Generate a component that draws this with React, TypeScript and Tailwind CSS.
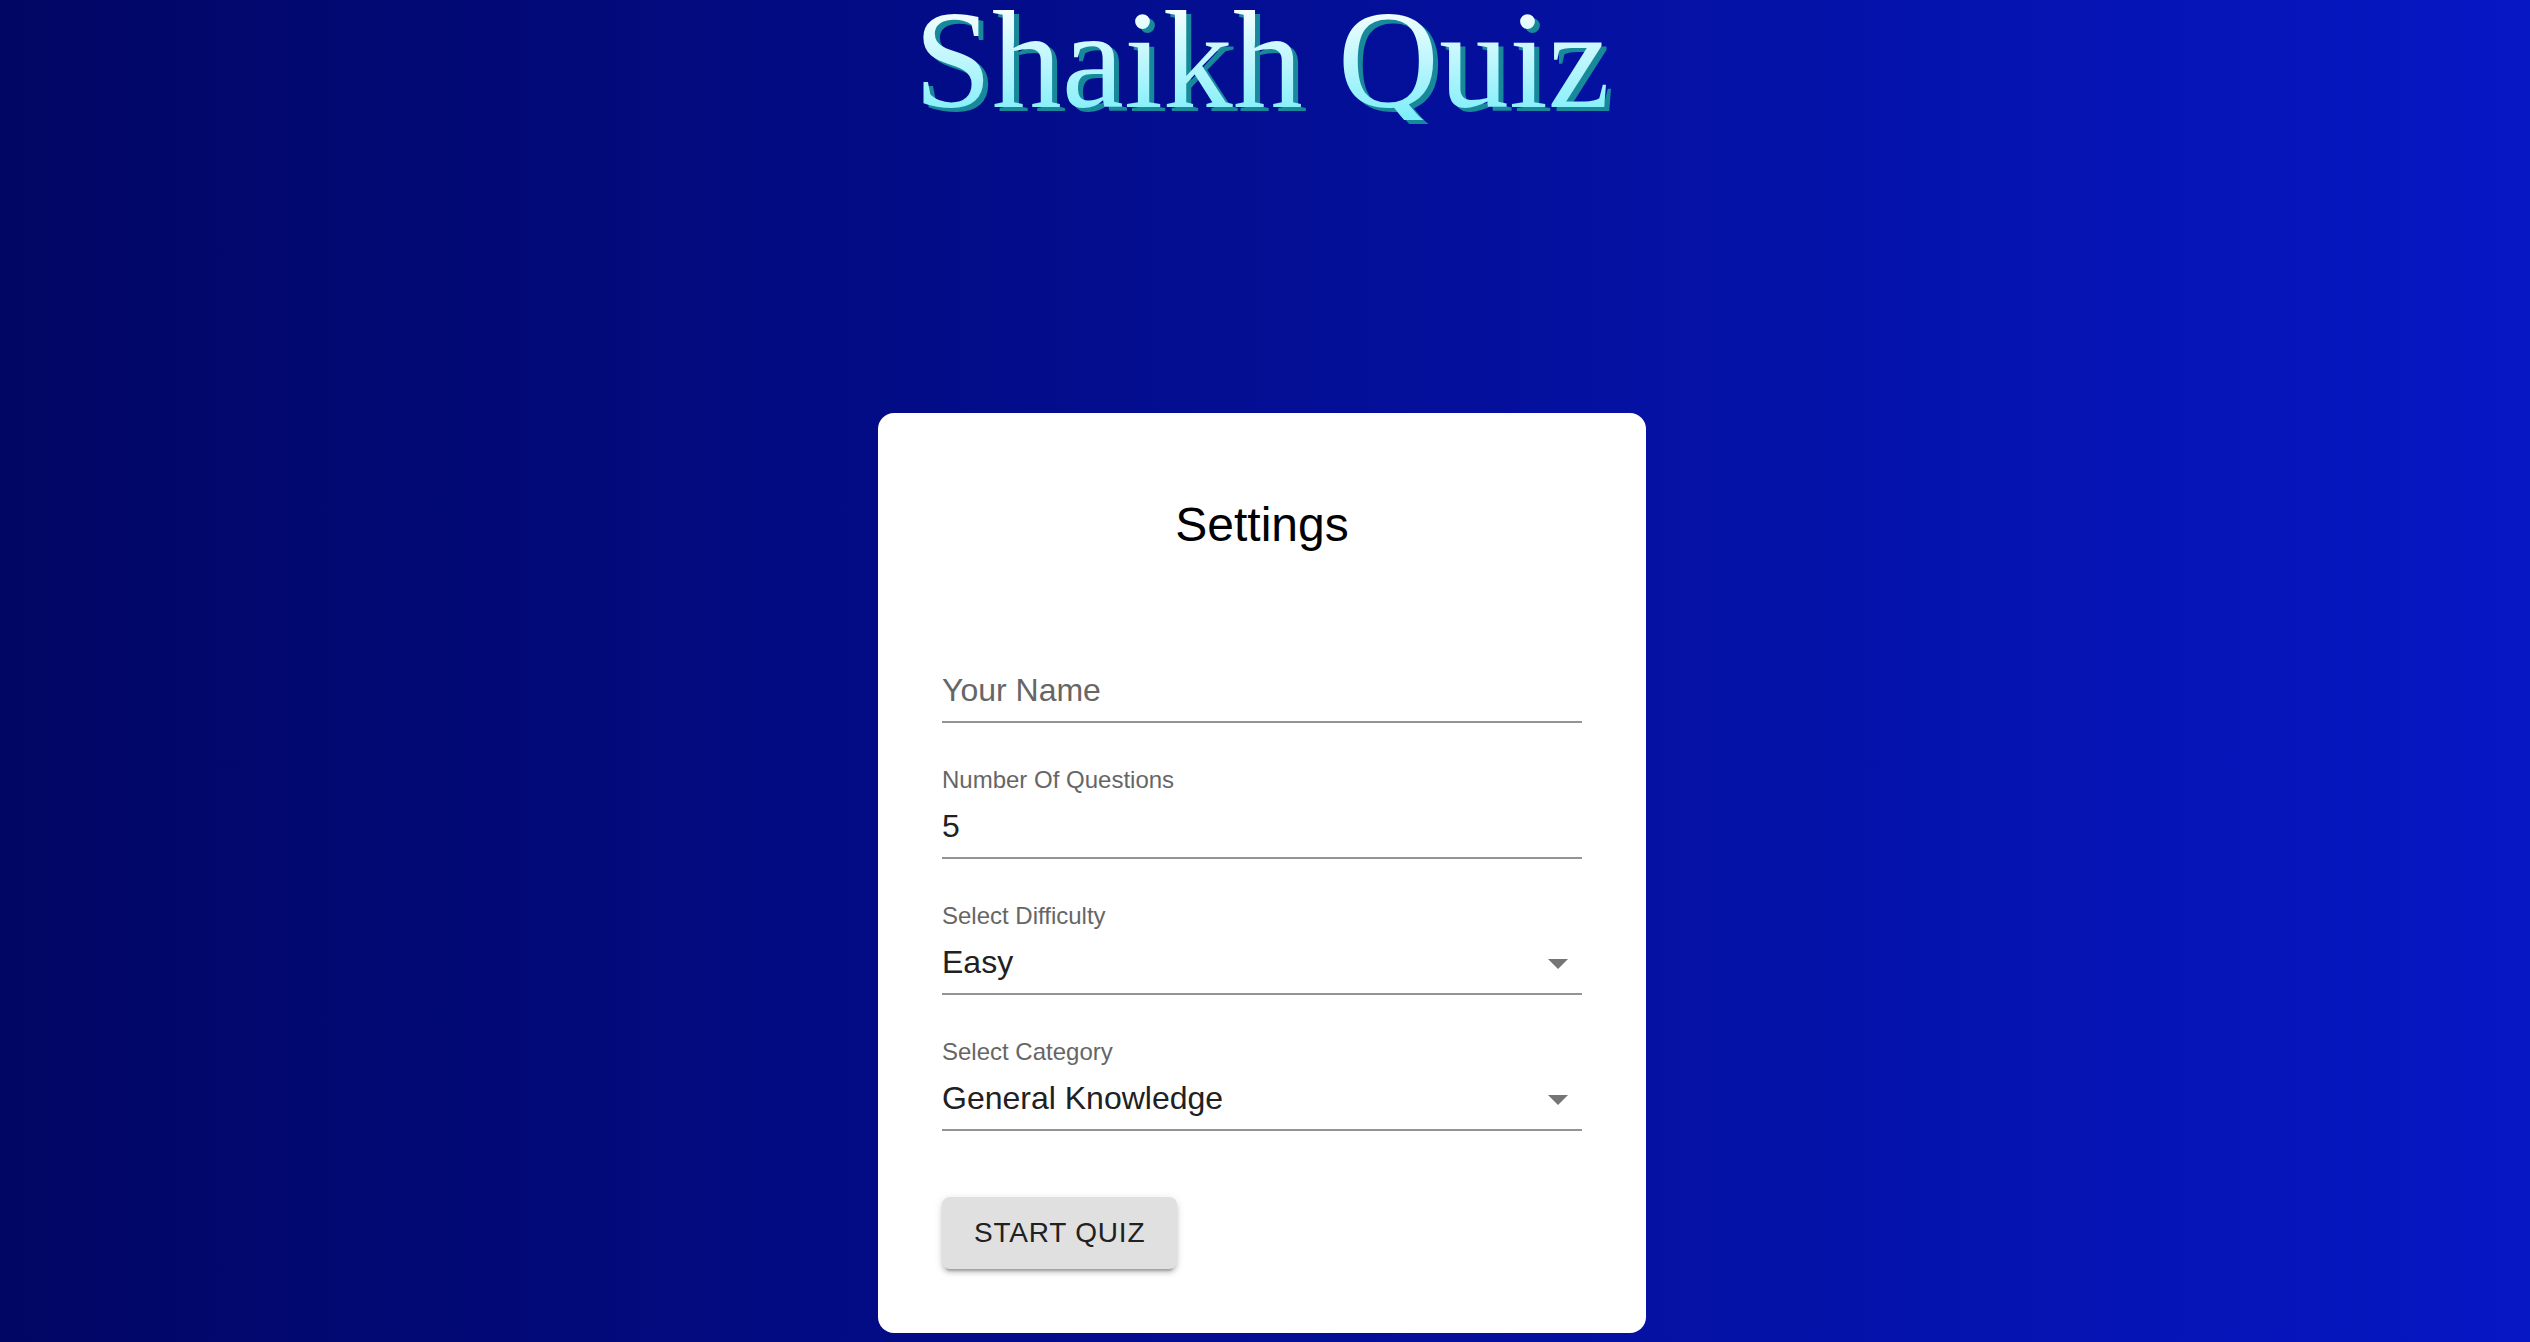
import React from "react";

function Arrow() {
  return (
    <svg
      viewBox="0 0 24 24"
      className="absolute right-0 top-[8px] w-[48px] h-[48px]"
      fill="#757575"
    >
      <path d="M7 10l5 5 5-5z" />
    </svg>
  );
}

function Field({
  label,
  value,
  select,
  placeholder,
}: {
  label?: string;
  value: string;
  select?: boolean;
  placeholder?: boolean;
}) {
  return (
    <div className="h-[96px] flex flex-col">
      <div className="h-[32px] pt-[5px] text-[24px] leading-[24px] text-[#666666]">
        {label ?? ""}
      </div>
      <div className="relative h-[64px] pt-[8px] pb-[8px] border-b-2 border-[#949494]">
        <div
          className={
            "text-[32px] leading-[46px] " +
            (placeholder ? "text-[#666666]" : "text-[#212121]")
          }
        >
          {value}
        </div>
        {select ? <Arrow /> : null}
      </div>
    </div>
  );
}

export default function App() {
  return (
    <div className="min-h-screen w-full pr-[6px] bg-[linear-gradient(to_right,#010664,#0617c4)] flex flex-col items-center">
      <h1 className="m-0 font-['Liberation_Serif','Times_New_Roman',serif] font-normal text-[140px] leading-[120px] bg-[linear-gradient(to_bottom,#f2feff_10%,#7ceefa_100%)] bg-clip-text text-transparent [filter:drop-shadow(5px_4px_0_#17899b)]">
        Shaikh Quiz
      </h1>
      <div className="mt-[293px] w-[768px] rounded-2xl bg-white px-16 pt-[80px] pb-16 font-['Liberation_Sans',Arial,sans-serif]">
        <div className="text-center text-[48px] leading-[64px] text-black">
          Settings
        </div>
        <div className="mt-[70px] flex flex-col gap-[40px]">
          <Field value="Your Name" placeholder />
          <Field label="Number Of Questions" value="5" />
          <Field label="Select Difficulty" value="Easy" select />
          <Field label="Select Category" value="General Knowledge" select />
        </div>
        <button className="mt-[66px] h-[72px] px-8 rounded-lg bg-[#e0e0e0] text-[28px] leading-[72px] tracking-[0.8px] text-[#212121] uppercase shadow-[0_6px_2px_-4px_rgba(0,0,0,0.2),0_4px_4px_0_rgba(0,0,0,0.14),0_2px_10px_0_rgba(0,0,0,0.12)]">
          Start Quiz
        </button>
      </div>
    </div>
  );
}
